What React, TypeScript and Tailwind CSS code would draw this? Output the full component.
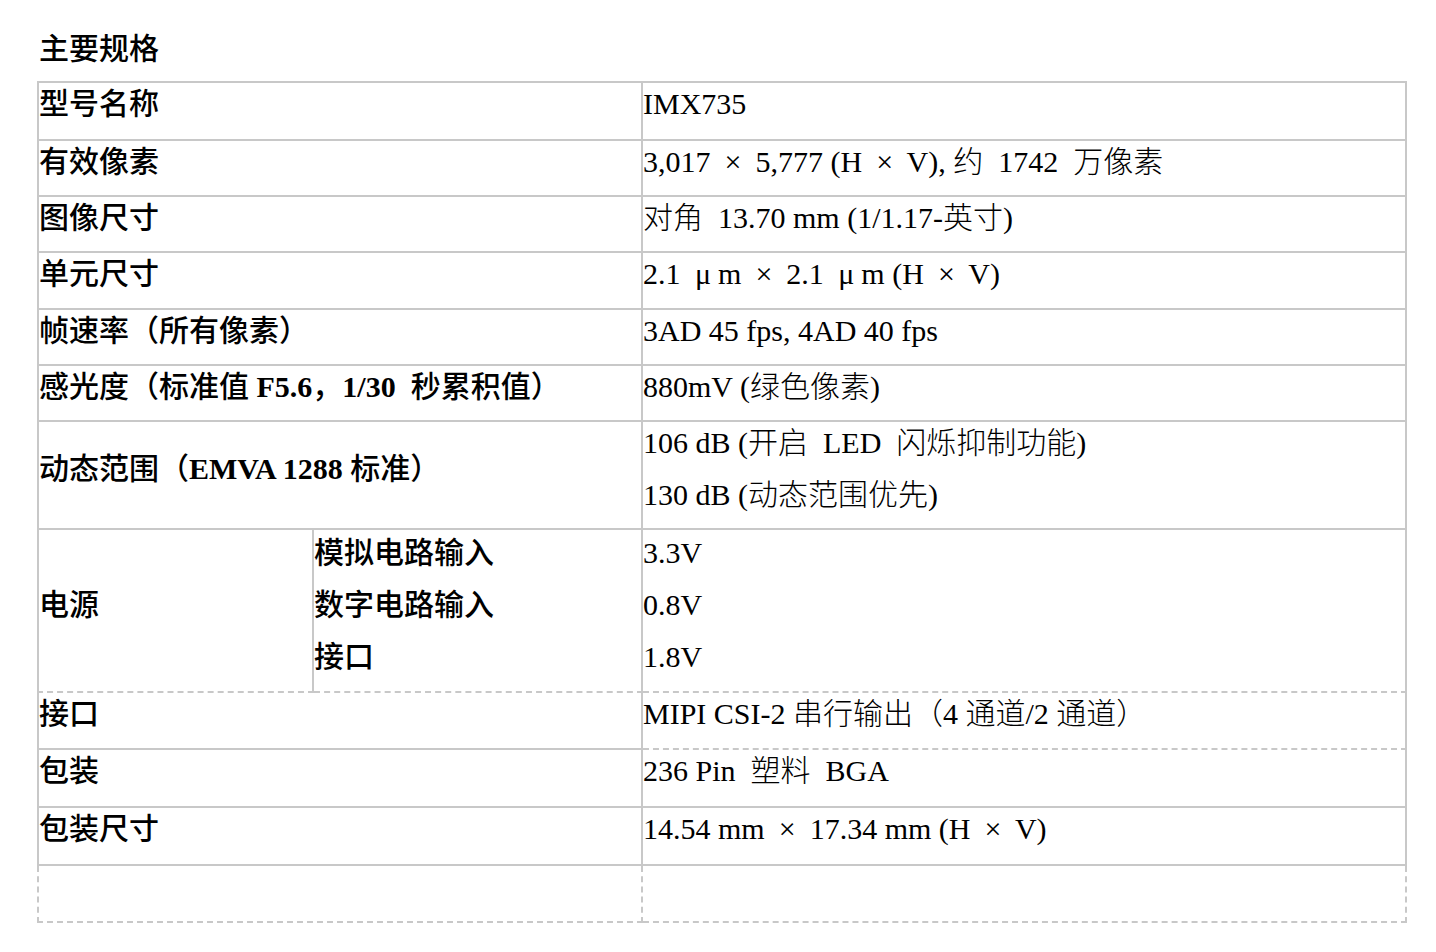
const line = "border-[#c8c8c8]";

type Row = {
  label: React.ReactNode;
  values: React.ReactNode[];
  pad?: string;
};

// fullwidth-looking symbol, as the reference renders × and μ from a CJK face
const W = ({ c }: { c: string }) => (
  <span className="inline-block w-[30px] text-center">{c}</span>
);

// latin runs inside the labels are set heavier
const B = ({ children }: { children: React.ReactNode }) => (
  <span className="font-bold">{children}</span>
);

const rows: Row[] = [
  { label: "型号名称", values: ["IMX735"], pad: "pb-[4px]" },
  {
    label: "有效像素",
    values: [
      <>
        3,017 <W c="×" /> 5,777 (H <W c="×" /> V), 约{"  "}1742{"  "}万像素
      </>,
    ],
  },
  { label: "图像尺寸", values: ["对角  13.70 mm (1/1.17-英寸)"] },
  {
    label: "单元尺寸",
    values: [
      <>
        2.1 <W c="μ" />m <W c="×" /> 2.1 <W c="μ" />m (H <W c="×" /> V)
      </>,
    ],
    pad: "pb-[3px]",
  },
  { label: "帧速率（所有像素）", values: ["3AD 45 fps, 4AD 40 fps"] },
  {
    label: (
      <>
        感光度（标准值 <B>F5.6</B>，<B>1/30</B>
        {"  "}秒累积值）
      </>
    ),
    values: ["880mV (绿色像素)"],
  },
  {
    label: (
      <>
        动态范围（<B>EMVA 1288</B> 标准）
      </>
    ),
    values: ["106 dB (开启  LED  闪烁抑制功能)", "130 dB (动态范围优先)"],
  },
];

const rowsAfter: Row[] = [
  { label: "包装", values: ["236 Pin  塑料  BGA"], pad: "pb-[4px]" },
  {
    label: "包装尺寸",
    values: [
      <>
        14.54 mm <W c="×" /> 17.34 mm (H <W c="×" /> V)
      </>,
    ],
    pad: "pb-[4px]",
  },
];

const labelFont = "font-['Liberation_Serif','Noto_Sans_CJK_SC',sans-serif] font-medium";
const valueFont = "font-['Liberation_Serif','Noto_Sans_CJK_SC',serif] font-light";

const Lines = ({ items }: { items: React.ReactNode[] }) => (
  <>
    {items.map((t, i) => (
      <p key={i} className="mb-[10px] leading-[42px] whitespace-pre">
        {t}
      </p>
    ))}
  </>
);

export default function App() {
  return (
    <div className="min-h-screen bg-white pl-[37px] text-[30px] text-black">
      <h2 className={`pt-[29px] pb-[12px] pl-[2px] leading-[40px] ${labelFont}`}>
        主要规格
      </h2>

      <div className="grid w-[1370px] grid-cols-[277px_329px_764px]">
        {rows.map((r, i) => (
          <div key={i} className="contents">
            <div
              className={`col-span-2 flex flex-col justify-center border-r-2 border-b-2 border-l-2 ${
                r.pad ?? "pb-[2px]"
              } ${line} ${labelFont} ${i === 0 ? "border-t-2" : ""}`}
            >
              <Lines items={[r.label]} />
            </div>
            <div
              className={`flex flex-col justify-center border-r-2 border-b-2 ${
                r.pad ?? "pb-[2px]"
              } ${line} ${valueFont} ${i === 0 ? "border-t-2" : ""}`}
            >
              <Lines items={r.values} />
            </div>
          </div>
        ))}

        {/* 电源 */}
        <div
          className={`flex flex-col justify-center border-r-2 border-b-2 border-l-2 pt-[2px] pb-[3px] [border-bottom-style:dashed] ${line} ${labelFont}`}
        >
          <Lines items={["电源"]} />
        </div>
        <div
          className={`flex flex-col justify-center border-r-2 border-b-2 pt-[2px] pb-[3px] [border-bottom-style:dashed] ${line} ${labelFont}`}
        >
          <Lines items={["模拟电路输入", "数字电路输入", "接口"]} />
        </div>
        <div
          className={`flex flex-col justify-center border-r-2 border-b-2 pt-[2px] pb-[3px] [border-bottom-style:dashed] ${line} ${valueFont}`}
        >
          <Lines items={["3.3V", "0.8V", "1.8V"]} />
        </div>

        {/* 接口 */}
        <div
          className={`col-span-2 flex flex-col justify-center border-r-2 border-b-2 border-l-2 pb-[3px] ${line} ${labelFont}`}
        >
          <Lines items={["接口"]} />
        </div>
        <div
          className={`flex flex-col justify-center border-r-2 border-b-2 pb-[3px] [border-bottom-style:dashed] ${line} ${valueFont}`}
        >
          <Lines items={["MIPI CSI-2 串行输出（4 通道/2 通道）"]} />
        </div>

        {rowsAfter.map((r, i) => (
          <div key={i} className="contents">
            <div
              className={`col-span-2 flex flex-col justify-center border-r-2 border-b-2 border-l-2 ${r.pad} ${line} ${labelFont}`}
            >
              <Lines items={[r.label]} />
            </div>
            <div
              className={`flex flex-col justify-center border-r-2 border-b-2 ${r.pad} ${line} ${valueFont}`}
            >
              <Lines items={r.values} />
            </div>
          </div>
        ))}

        {/* empty last row */}
        <div className={`col-span-2 h-[57px] border-r-2 border-b-2 border-l-2 border-dashed ${line}`} />
        <div className={`h-[57px] border-r-2 border-b-2 border-dashed ${line}`} />
      </div>
    </div>
  );
}
